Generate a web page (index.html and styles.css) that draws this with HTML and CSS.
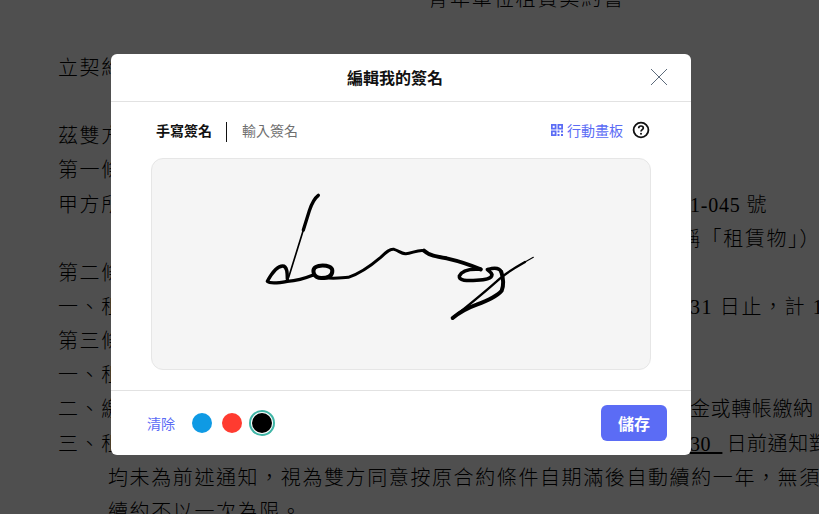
FILE: index.html
```html
<!DOCTYPE html>
<html lang="zh-Hant">
<head>
<meta charset="utf-8">
<title>編輯我的簽名</title>
<link rel="stylesheet" href="styles.css">
</head>
<body>
<main class="doc">
  <h1 class="doc-title">青年單位租賃契約書</h1>
  <p class="line"><span class="l">立契約書人</span><span class="r"></span></p>
  <p class="line gap"><span class="l">茲雙方同意訂立本契約</span><span class="r"></span></p>
  <p class="line"><span class="l">第一條</span><span class="r"></span></p>
  <p class="line"><span class="l">甲方所有之房屋</span><span class="r addr">1-045 號</span></p>
  <p class="line"><span class="l"></span><span class="r shift">稱「租賃物」）</span></p>
  <p class="line"><span class="l">第二條</span><span class="r"></span></p>
  <p class="line"><span class="l">一、租賃期間</span><span class="r">31 日止，計 1</span></p>
  <p class="line"><span class="l">第三條</span><span class="r"></span></p>
  <p class="line"><span class="l">一、租金</span><span class="r"></span></p>
  <p class="line"><span class="l">二、繳納方式</span><span class="r tight">金或轉帳繳納</span></p>
  <p class="line"><span class="l">三、租賃期滿</span><span class="r tight"><u class="under">30&nbsp;&nbsp;</u>日前通知對</span></p>
  <p class="line indent"><span>均未為前述通知，視為雙方同意按原合約條件自期滿後自動續約一年，無須</span></p>
  <p class="line indent"><span>續約不以一次為限。</span></p>
</main>

<div class="overlay">
  <section class="modal">
    <header class="modal-head">
      <h2 class="modal-title">編輯我的簽名</h2>
      <button class="close" aria-label="關閉">
        <svg width="16" height="16" viewBox="0 0 16 16"><path d="M0 0 16 16M16 0 0 16" stroke="#5d6b7b" stroke-width="1" fill="none"/></svg>
      </button>
    </header>
    <div class="modal-body">
      <div class="tabs">
        <span class="tab active">手寫簽名</span>
        <span class="divider"></span>
        <span class="tab">輸入簽名</span>
        <a class="mobile">
          <svg class="qr" width="12" height="12" viewBox="0 0 12 12" fill="#5b6cf5">
            <path d="M0 0h5.500v5.500H0zM1.700 1.700v2h2v-2zM6.500 0h5.500v5.500H6.500zM8.200 1.700v2h2v-2zM0 6.500h5.500v5.500H0zM1.700 8.200v2h2v-2z" fill-rule="evenodd"/>
            <path d="M6.500 6.500h2v2h-2zM10 6.500h2v2h-2zM10 10h2v2h-2zM6.500 10h2v2h-2z"/>
          </svg>
          行動畫板
        </a>
        <svg class="help" width="18" height="18" viewBox="0 0 18 18" fill="none" stroke="#111">
          <circle cx="9" cy="9" r="7.400" stroke-width="1.800"/>
          <path d="M6.700 7.200c0-1.400 1-2.200 2.300-2.200s2.300.8 2.300 2c0 1.700-2.300 1.700-2.300 3.600" stroke-width="1.700"/>
          <circle cx="9" cy="12.800" r="1" fill="#111" stroke="none"/>
        </svg>
      </div>
      <div class="pad">
        <svg class="sig" width="498" height="210" viewBox="-294 -63 1494 630" fill="none" stroke="#000" stroke-linecap="round" stroke-linejoin="round">
          <path stroke-width="10" d="M205 46C192 56 186 68 178 92L160 150"/>
          <path stroke-width="5" d="M160 150L116 292"/>
          <path stroke-width="10" d="M112 298C112 280 112 258 98 258C80 258 66 278 52 304C60 312 90 308 112 304C140 302 165 295 190 285"/>
          <path stroke-width="12" d="M192 282C186 266 196 258 212 257C232 256 247 260 247 272C247 288 232 294 214 294C202 294 196 290 192 282Z"/>
          <path stroke-width="9" d="M214 294C240 294 270 296 295 292C325 282 365 255 392 232C405 220 418 206 432 208C448 212 452 222 468 221C485 220 505 208 522 212"/>
          <path stroke-width="12" d="M522 212C536 226 560 230 590 235C625 243 660 254 692 268"/>
          <path stroke-width="10.500" d="M692 268C665 266 636 270 628 288C626 302 650 303 680 301C705 299 726 296 726 284C722 272 705 268 715 268C730 264 748 262 754 276"/>
          <path stroke-width="12" d="M754 276C760 295 762 315 755 332C740 350 710 362 680 374C655 383 630 396 608 414"/>
          <path stroke-width="7" d="M608 414C650 380 700 340 740 304C760 285 800 260 825 246"/>
          <path stroke-width="3.500" d="M825 246L850 232"/>
        </svg>
      </div>
    </div>
    <footer class="modal-foot">
      <a class="clear">清除</a>
      <div class="swatches">
        <span class="dot blue"></span>
        <span class="dot red"></span>
        <span class="dot black selected"></span>
      </div>
      <button class="save">儲存</button>
    </footer>
  </section>
</div>
</body>
</html>
```
FILE: styles.css
```css
* { box-sizing: border-box; }
html, body { margin: 0; height: 100%; overflow: hidden; }
body { background: #fff; position: relative; }

.doc {
  margin-top: -16px;
  padding-left: 58px;
  font-family: "Liberation Serif", "Noto Sans CJK TC", serif;
  font-size: 20px;
  font-weight: 300;
  letter-spacing: 1.600px;
  color: #000;
  white-space: nowrap;
}
.doc-title {
  margin: 0 0 37px;
  padding-left: 370px;
  font-size: 20px;
  font-weight: 300;
  letter-spacing: 1.900px;
  line-height: 30px;
}
.line { margin: 0; height: 34.150px; line-height: 34.150px; display: flex; }
.line.gap { margin-top: 34.150px; }
.l { width: 632px; flex: none; overflow: hidden; }
.r { flex: none; }
.addr { letter-spacing: .8px; }
.shift { margin-left: -10px; }
.tight { letter-spacing: .6px; }
.under { font-weight: 300; margin-right: 4px; }
.indent { padding-left: 50px; }

.overlay {
  position: absolute;
  inset: 0;
  background: rgba(0, 0, 0, .69);
  display: flex;
  justify-content: center;
  align-items: flex-start;
  padding: 54px 17px 0 0;
}
.modal {
  width: 580px;
  height: 401px;
  background: #fff;
  border-radius: 6px;
  display: flex;
  flex-direction: column;
  font-family: "Noto Sans CJK TC", "Liberation Sans", sans-serif;
}
.modal-head {
  height: 48px;
  flex: none;
  display: flex;
  align-items: center;
  padding: 0 24px 2px 28px;
  border-bottom: 1px solid #e2e2e2;
}
.modal-title {
  flex: 1;
  margin: 0;
  text-align: center;
  font-size: 16px;
  font-weight: 700;
  line-height: 24px;
  color: #111;
}
.close { border: 0; background: none; padding: 0; width: 16px; height: 16px; display: block; }
.close svg { display: block; }

.modal-body { flex: 1; padding: 0 40px; display: flex; flex-direction: column; }
.tabs { height: 56px; flex: none; display: flex; align-items: center; padding: 0 0 0 5px; }
.tab { font-size: 14px; line-height: 20px; color: #6f6f6f; }
.tab.active { font-weight: 700; color: #111; }
.divider { width: 1px; height: 20px; background: #111; margin: 3px 15px 0 14px; }
.mobile { margin-left: auto; display: flex; align-items: center; gap: 4px; font-size: 14px; line-height: 20px; color: #5b6cf5; }
.help { margin: 0 1px 0 9px; display: block; }

.pad {
  width: 500px;
  height: 212px;
  background: #f5f5f5;
  border: 1px solid #e6e6e6;
  border-radius: 12px;
  overflow: hidden;
}
.sig { display: block; }

.modal-foot {
  height: 65px;
  flex: none;
  display: flex;
  align-items: center;
  padding: 0 24px 0 36px;
  border-top: 1px solid #e2e2e2;
}
.clear { font-size: 14px; line-height: 20px; color: #5b6cf5; }
.swatches { display: flex; align-items: center; gap: 10px; margin-left: 17px; }
.dot { width: 20px; height: 20px; border-radius: 50%; display: block; }
.blue { background: #0f9ae4; }
.red { background: #ff3b30; }
.black { background: #000; }
.selected { box-shadow: 0 0 0 1px #fff, 0 0 0 3px #3fb5a6; }
.save {
  margin-left: auto;
  width: 66px;
  height: 36px;
  border: 0;
  border-radius: 6px;
  background: #5b6cf5;
  color: #fff;
  font: 700 16px/24px "Noto Sans CJK TC", "Liberation Sans", sans-serif;
}
```
